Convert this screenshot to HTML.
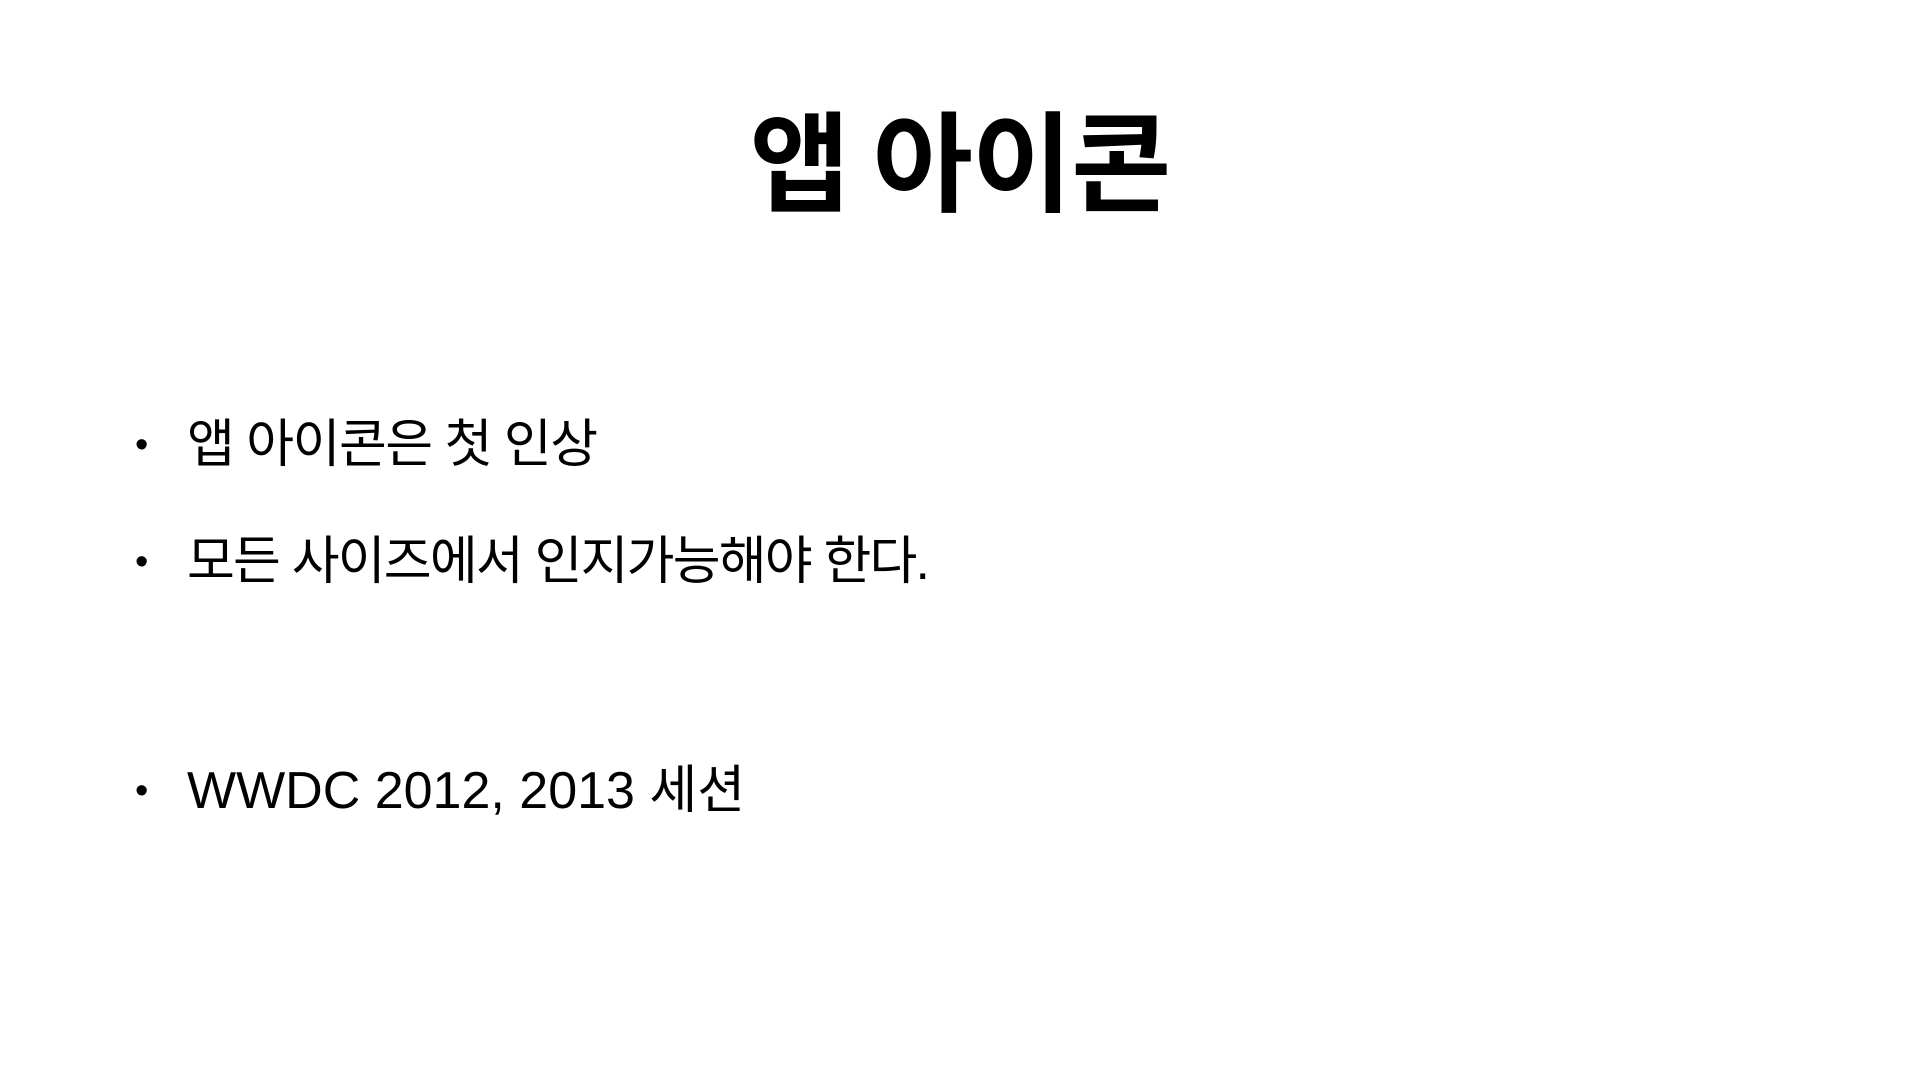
<!DOCTYPE html>
<html><head><meta charset="utf-8"><style>
html,body{margin:0;padding:0;background:#fff;width:1920px;height:1080px;overflow:hidden}
body{font-family:"Liberation Sans","Noto Sans CJK KR",sans-serif;color:#000;position:relative}
h1{position:absolute;top:92px;left:0;width:1920px;text-align:center;margin:0;font-size:109px;font-weight:bold;line-height:130px;font-family:"Noto Sans CJK KR",sans-serif;letter-spacing:-1px}
.b{position:absolute;left:187px;font-size:52px;line-height:70px;white-space:nowrap;letter-spacing:-1.5px}
.b:before{content:"•";position:absolute;left:-52px;font-size:38px;letter-spacing:0}
</style></head><body>
<h1>앱 아이콘</h1>
<div class="b" style="top:410px">앱 아이콘은 첫 인상</div>
<div class="b" style="top:527px;letter-spacing:-1.8px">모든 사이즈에서 인지가능해야 한다.</div>
<div class="b" style="top:756px;letter-spacing:0px">WWDC 2012, 2013 세션</div>
</body></html>
